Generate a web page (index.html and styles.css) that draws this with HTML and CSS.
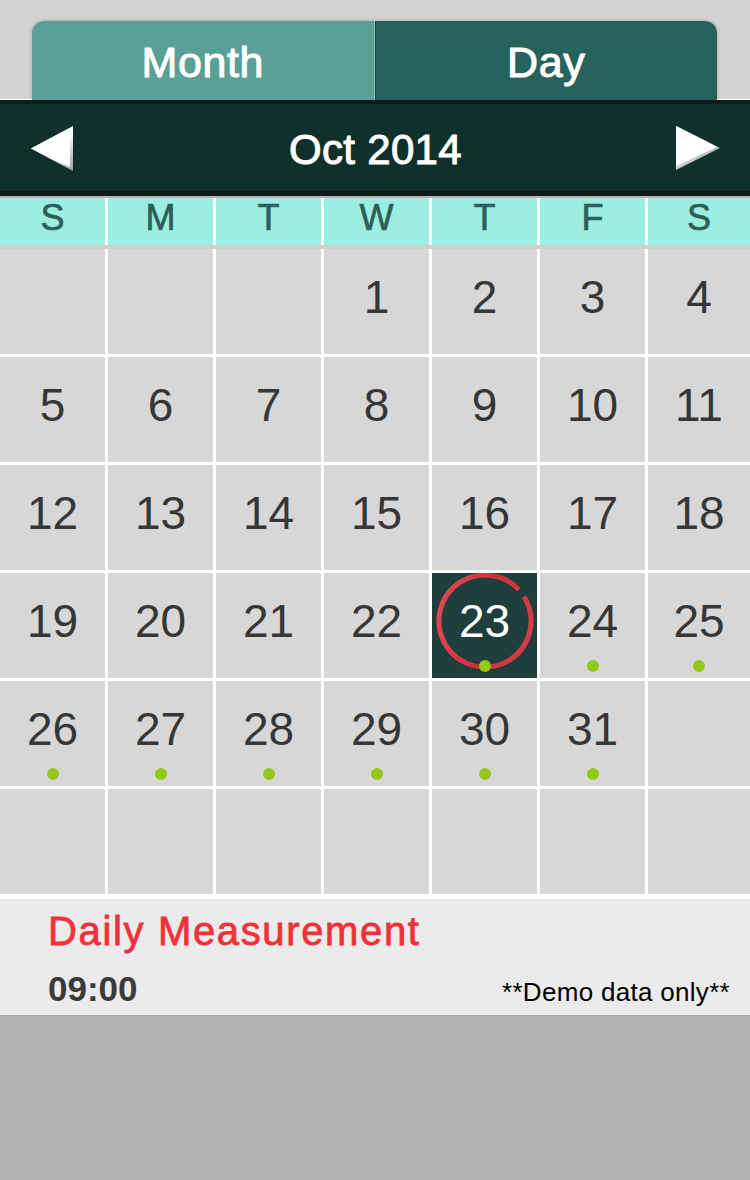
FILE: index.html
```html
<!DOCTYPE html>
<html>
<head>
<meta charset="utf-8">
<link rel="stylesheet" href="styles.css">
</head>
<body>
<div class="top">
  <div class="seg">
    <div class="seg-btn month">Month</div>
    <div class="seg-btn day">Day</div>
  </div>
</div>
<div class="header">
  <svg class="arrow" width="46" height="48" viewBox="0 0 46 48">
    <defs>
      <linearGradient id="gl" x1="0" y1="0" x2="1" y2="1">
        <stop offset="0.55" stop-color="#ffffff"/>
        <stop offset="1" stop-color="#9a9a9a"/>
      </linearGradient>
    </defs>
    <polygon points="1,23.5 43,1 43,46" fill="url(#gl)"/>
    <polygon points="1,23.5 40,3 40,42" fill="#ffffff"/>
  </svg>
  <div class="title">Oct 2014</div>
  <svg class="arrow" width="46" height="48" viewBox="0 0 46 48">
    <defs>
      <linearGradient id="gr" x1="0" y1="0" x2="0.6" y2="1">
        <stop offset="0.5" stop-color="#ffffff"/>
        <stop offset="1" stop-color="#8a8a8a"/>
      </linearGradient>
    </defs>
    <polygon points="1,1 45,23 1,45" fill="url(#gr)"/>
    <polygon points="1,1 42,22 1,41" fill="#ffffff"/>
  </svg>
</div>
<div class="weekdays">
  <div class="wd">S</div><div class="wd">M</div><div class="wd">T</div><div class="wd">W</div><div class="wd">T</div><div class="wd">F</div><div class="wd">S</div>
</div>
<div class="band"></div>
<div class="grid">
  <div class="cell"></div><div class="cell"></div><div class="cell"></div>
  <div class="cell"><span class="num">1</span></div>
  <div class="cell"><span class="num">2</span></div>
  <div class="cell"><span class="num">3</span></div>
  <div class="cell"><span class="num">4</span></div>

  <div class="cell"><span class="num">5</span></div>
  <div class="cell"><span class="num">6</span></div>
  <div class="cell"><span class="num">7</span></div>
  <div class="cell"><span class="num">8</span></div>
  <div class="cell"><span class="num">9</span></div>
  <div class="cell"><span class="num">10</span></div>
  <div class="cell"><span class="num">11</span></div>

  <div class="cell"><span class="num">12</span></div>
  <div class="cell"><span class="num">13</span></div>
  <div class="cell"><span class="num">14</span></div>
  <div class="cell"><span class="num">15</span></div>
  <div class="cell"><span class="num">16</span></div>
  <div class="cell"><span class="num">17</span></div>
  <div class="cell"><span class="num">18</span></div>

  <div class="cell"><span class="num">19</span></div>
  <div class="cell"><span class="num">20</span></div>
  <div class="cell"><span class="num">21</span></div>
  <div class="cell"><span class="num">22</span></div>
  <div class="cell today">
    <svg class="ring" width="105" height="105" viewBox="0 0 105 105">
      <defs>
        <linearGradient id="rg" x1="0" y1="0" x2="1" y2="1">
          <stop offset="0" stop-color="#e3505a"/>
          <stop offset="0.5" stop-color="#cf2f3a"/>
          <stop offset="1" stop-color="#d8424c"/>
        </linearGradient>
      </defs>
      <circle cx="53" cy="48" r="46" fill="none" stroke="url(#rg)" stroke-width="5" stroke-dasharray="280 14" transform="rotate(-32 53 48)"/>
    </svg>
    <span class="num">23</span><span class="dot"></span>
  </div>
  <div class="cell"><span class="num">24</span><span class="dot"></span></div>
  <div class="cell"><span class="num">25</span><span class="dot"></span></div>

  <div class="cell"><span class="num">26</span><span class="dot"></span></div>
  <div class="cell"><span class="num">27</span><span class="dot"></span></div>
  <div class="cell"><span class="num">28</span><span class="dot"></span></div>
  <div class="cell"><span class="num">29</span><span class="dot"></span></div>
  <div class="cell"><span class="num">30</span><span class="dot"></span></div>
  <div class="cell"><span class="num">31</span><span class="dot"></span></div>
  <div class="cell"></div>

  <div class="cell"></div><div class="cell"></div><div class="cell"></div><div class="cell"></div><div class="cell"></div><div class="cell"></div><div class="cell"></div>
</div>
<div class="panel">
  <div class="event-title">Daily Measurement</div>
  <div class="event-row">
    <span class="time">09:00</span>
    <span class="demo">**Demo data only**</span>
  </div>
</div>
</body>
</html>
```

FILE: styles.css
```css
html, body {
  margin: 0;
  padding: 0;
}
body {
  width: 750px;
  height: 1180px;
  background: #b2b2b3;
  font-family: "Liberation Sans", Arial, sans-serif;
  overflow: hidden;
}
.top {
  background: #d3d3d3;
  height: 100px;
  padding: 21px 33px 0 32px;
  box-sizing: border-box;
  border-bottom: 1px solid #ffffff;
}
.seg {
  display: flex;
  height: 79px;
  border-radius: 12px 12px 0 0;
  overflow: hidden;
  box-shadow: 0 0 4px rgba(0, 0, 0, 0.22);
}
.seg-btn {
  flex: 1;
  display: flex;
  align-items: center;
  justify-content: center;
  color: #ffffff;
  font-size: 43px;
  letter-spacing: 0.6px;
  -webkit-text-stroke: 1px #ffffff;
  padding-top: 3px;
}
.month {
  background: #5ba097;
  border-right: 1px solid #8cc0b8;
}
.day {
  background: #27635d;
  border-left: 1px solid #1b4843;
}
.header {
  background: #10302b;
  border-top: 4px solid #0b1d1a;
  border-bottom: 5px solid #0b1c19;
  height: 87px;
  display: flex;
  align-items: center;
  justify-content: space-between;
  padding: 0 29px 0 30px;
}
.arrow {
  display: block;
  margin-top: 3px;
}
.title {
  color: #ffffff;
  font-size: 42px;
  letter-spacing: 0.3px;
  -webkit-text-stroke: 1px #ffffff;
  padding-top: 5px;
}
.weekdays {
  margin-top: 2px;
  display: grid;
  grid-template-columns: repeat(6, 105px) 1fr;
  column-gap: 3px;
  background: #ffffff;
  height: 47px;
}
.wd {
  background: #9ceee2;
  color: #2d5f58;
  font-size: 36px;
  line-height: 40px;
  -webkit-text-stroke: 0.7px #2d5f58;
  text-align: center;
}
.band {
  height: 4px;
  background: #cfcfcf;
}
.grid {
  display: grid;
  grid-template-columns: repeat(6, 105px) 1fr;
  grid-template-rows: repeat(6, 105px);
  gap: 3px;
  background: #ffffff;
  padding-bottom: 5px;
}
.cell {
  background: #d7d7d7;
  position: relative;
  overflow: hidden;
  display: flex;
  flex-direction: column;
  align-items: center;
  padding-top: 25px;
  box-sizing: border-box;
}
.num {
  font-size: 46px;
  line-height: 46px;
  color: #363636;
  position: relative;
}
.dot {
  width: 12px;
  height: 12px;
  border-radius: 50%;
  background: #95c81b;
  margin-top: 16px;
  position: relative;
}
.today {
  background: #1e3f3b;
}
.today .num {
  color: #ffffff;
}
.ring {
  position: absolute;
  left: 0;
  top: 0;
}
.panel {
  background: #ebebeb;
  height: 117px;
  box-sizing: border-box;
  padding: 12px 20px 0 48px;
  border-bottom: 1px solid #a6a6a6;
}
.event-title {
  color: #f0313a;
  font-size: 40px;
  line-height: 40px;
  letter-spacing: 1.65px;
  -webkit-text-stroke: 0.8px #f0313a;
}
.event-row {
  display: flex;
  justify-content: space-between;
  align-items: baseline;
  margin-top: 20px;
}
.time {
  font-size: 35px;
  line-height: 35px;
  font-weight: bold;
  color: #3a3a3a;
}
.demo {
  font-size: 26px;
  color: #000000;
  letter-spacing: 0.3px;
}
```
